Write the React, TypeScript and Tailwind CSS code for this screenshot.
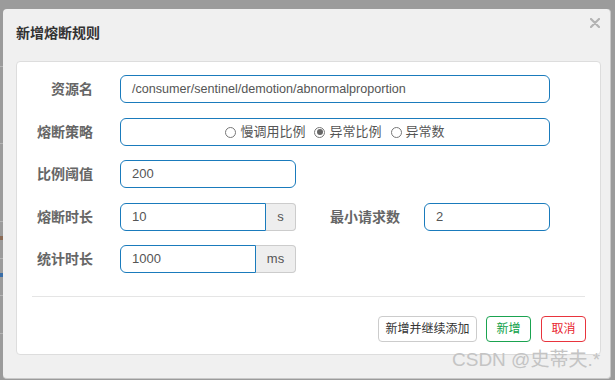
import React from 'react'

const FONT = { fontFamily: '"Liberation Sans", "Noto Sans CJK SC", sans-serif' }

function Label({ text }: { text: string }) {
  return <div className="w-[76px] shrink-0 text-right text-[14px] font-bold text-[#666]">{text}</div>
}

function Radio({ checked, label }: { checked?: boolean; label: string }) {
  return (
    <span className="flex items-center gap-[4px]">
      <span className="w-[11px] h-[11px] rounded-full border border-[#777] bg-white flex items-center justify-center">
        {checked && <span className="w-[6px] h-[6px] rounded-full bg-[#666]" />}
      </span>
      <span>{label}</span>
    </span>
  )
}

export default function App() {
  return (
    <div className="relative w-[615px] h-[380px] overflow-hidden bg-[#9b9b9b]" style={FONT}>
      {/* page behind the modal */}
      <div className="absolute left-0 top-0 w-[3px] h-full">
        <div className="mt-[66px] border-t border-[#b5b5b5]" />
        <div className="mt-[76px] border-t border-[#b5b5b5]" />
        <div className="mt-[77px] border-t border-[#b5b5b5]" />
        <div className="mt-[14px] h-[4px] bg-[#8a6a55]" />
        <div className="mt-[18px] border-t border-[#b5b5b5]" />
        <div className="mt-[14px] h-[4px] bg-[#3a6ea8]" />
        <div className="mt-[18px] border-t border-[#b5b5b5]" />
        <div className="mt-[37px] border-t border-[#b5b5b5]" />
      </div>

      {/* modal */}
      <div className="absolute left-[3px] top-[9px] w-[608px] h-[370px] bg-[#f0f0f0] rounded-[4px] border-b border-r border-[#c8c8c8]">
        <div className="relative h-[52px] pl-[13px] pt-[14px]">
          <div className="text-[14px] font-bold text-[#333] leading-[20px]">新增熔断规则</div>
          <svg className="absolute right-[10px] top-[9px]" width="10" height="10" viewBox="0 0 10 10">
            <path d="M1 1 L9 9 M9 1 L1 9" stroke="#b3b3b3" strokeWidth="2.2" strokeLinecap="round" />
          </svg>
        </div>

        <div className="ml-[13px] w-[585px] h-[294px] bg-white border border-[#dddddd] rounded-[4px] pt-[13px] text-[#555]">
          {/* 资源名 */}
          <div className="flex items-center h-[28px]">
            <Label text="资源名" />
            <div className="ml-[27px] w-[430px] h-[28px] border border-[#1a7bbc] rounded-[6px] flex items-center px-[11px] text-[12.6px] text-[#555]">
              /consumer/sentinel/demotion/abnormalproportion
            </div>
          </div>

          {/* 熔断策略 */}
          <div className="flex items-center h-[28px] mt-[15px]">
            <Label text="熔断策略" />
            <div className="ml-[27px] w-[430px] h-[28px] border border-[#1a7bbc] rounded-[6px] flex items-center justify-center gap-[9px] text-[13px] text-[#555]">
              <Radio label="慢调用比例" />
              <Radio checked label="异常比例" />
              <Radio label="异常数" />
            </div>
          </div>

          {/* 比例阈值 */}
          <div className="flex items-center h-[28px] mt-[14px]">
            <Label text="比例阈值" />
            <div className="ml-[27px] w-[176px] h-[28px] border border-[#1a7bbc] rounded-[6px] flex items-center px-[11px] text-[13px] text-[#555]">
              200
            </div>
          </div>

          {/* 熔断时长 / 最小请求数 */}
          <div className="flex items-center h-[28px] mt-[15px]">
            <Label text="熔断时长" />
            <div className="ml-[27px] flex h-[28px]">
              <div className="w-[146px] border border-[#1a7bbc] rounded-l-[6px] flex items-center px-[11px] text-[13px] text-[#555]">
                10
              </div>
              <div className="w-[30px] bg-[#eeeeee] border border-l-0 border-[#cccccc] rounded-r-[4px] flex items-center justify-center text-[13px] text-[#555]">
                s
              </div>
            </div>
            <div className="ml-[34px] text-[14px] font-bold text-[#666]">最小请求数</div>
            <div className="ml-[24px] w-[126px] h-[28px] border border-[#1a7bbc] rounded-[6px] flex items-center px-[11px] text-[13px] text-[#555]">
              2
            </div>
          </div>

          {/* 统计时长 */}
          <div className="flex items-center h-[28px] mt-[14px]">
            <Label text="统计时长" />
            <div className="ml-[27px] flex h-[28px]">
              <div className="w-[136px] border border-[#1a7bbc] rounded-l-[6px] flex items-center px-[11px] text-[13px] text-[#555]">
                1000
              </div>
              <div className="w-[40px] bg-[#eeeeee] border border-l-0 border-[#cccccc] rounded-r-[4px] flex items-center justify-center text-[13px] text-[#555]">
                ms
              </div>
            </div>
          </div>

          <div className="mx-[15px] mt-[23px] border-t border-[#e5e5e5]" />

          <div className="flex justify-end gap-[9px] mr-[14px] mt-[19px] text-[12px]">
            <button className="w-[99px] h-[26px] border border-[#cccccc] rounded-[4px] bg-white text-[#333]">
              新增并继续添加
            </button>
            <button className="w-[45px] h-[26px] border border-[#1aa350] rounded-[4px] bg-white text-[#0f9f48]">
              新增
            </button>
            <button className="ml-[1px] w-[45px] h-[26px] border border-[#e8343d] rounded-[4px] bg-white text-[#e8262f]">
              取消
            </button>
          </div>
        </div>
      </div>

      {/* watermark */}
      <div className="absolute left-[452px] top-[348px] text-[19px] leading-[24px] text-[#c4c4c4] whitespace-nowrap">
        CSDN @史蒂夫.*
      </div>
    </div>
  )
}
